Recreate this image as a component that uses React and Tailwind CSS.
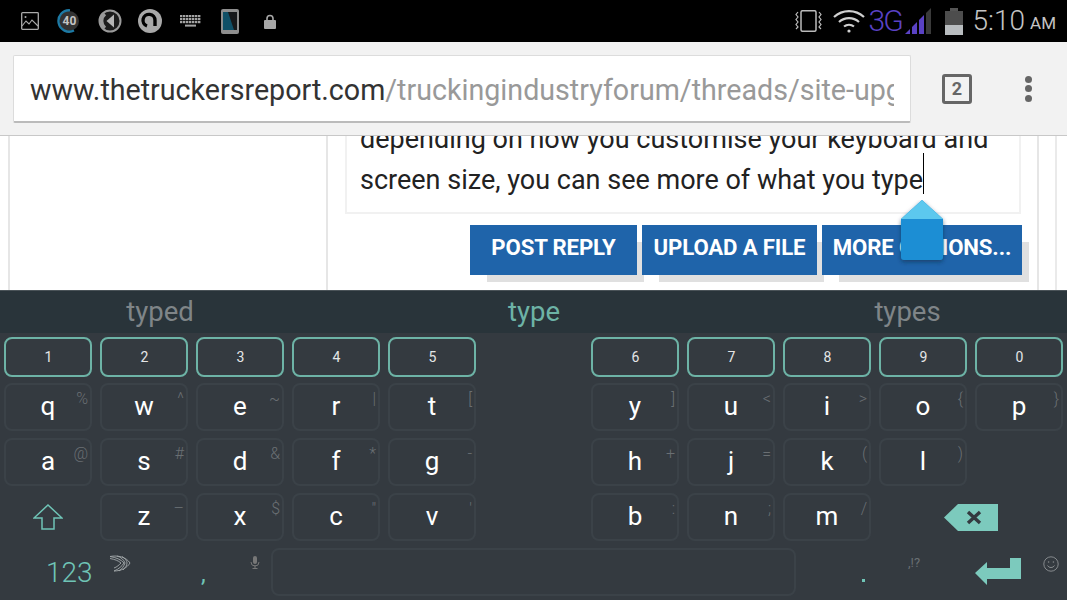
const rows = {
  q: [["q","%"],["w","^"],["e","~"],["r","|"],["t","["]],
  qr: [["y","]"],["u","<"],["i",">"],["o","{"],["p","}"]],
  a: [["a","@"],["s","#"],["d","&"],["f","*"],["g","-"]],
  ar: [["h","+"],["j","="],["k","("],["l",")"]],
  z: [["z","–"],["x","$"],["c","\""],["v","'"]],
  zr: [["b",":"],["n",";"],["m","/"]],
};

function NumKey({ n }) {
  return (
    <div className="w-[88px] h-10 rounded-lg border-2 border-[#6db3a6] flex items-center justify-center text-[14px] text-[#e4e6e7] pl-px">
      {n}
    </div>
  );
}

function Key({ k, h }) {
  return (
    <div className="relative w-[88px] h-12 rounded-lg border-2 border-[#3b4248] flex items-center justify-center text-[26px] leading-none text-white pb-[2px]">
      {k}
      <span className="absolute top-[4px] right-[2px] text-[16px] leading-[20px] text-[#6a6f73] font-light">{h}</span>
    </div>
  );
}

function Group({ children }) {
  return <div className="flex gap-2">{children}</div>;
}

function Row({ children }) {
  return <div className="flex justify-between h-12">{children}</div>;
}

function Gallery() {
  return (
    <svg width="18" height="18" viewBox="0 0 18 18" fill="none" stroke="#aaa" strokeWidth="1.3">
      <rect x="0.7" y="0.7" width="16.6" height="16.6" rx="0.8" />
      <path d="M1 14l4-5 3 3 3-4 6 6" strokeWidth="1.1" />
      <circle cx="4.5" cy="5" r="1" fill="#aaa" stroke="none" />
    </svg>
  );
}

function Ring40() {
  return (
    <svg width="24" height="24" viewBox="0 0 24 24">
      <circle cx="12" cy="12" r="10" fill="#333333" />
      <path d="M13 1.3A10.7 10.7 0 1 0 17 21.5" fill="none" stroke="#1d7aa5" strokeWidth="2.3" />
      <text x="12.5" y="16.3" textAnchor="middle" fontSize="12" fontWeight="700" fill="#c4c4c4" fontFamily="Roboto">40</text>
    </svg>
  );
}

function Volume() {
  return (
    <svg width="24" height="24" viewBox="0 0 24 24">
      <circle cx="12" cy="12" r="10.5" fill="#1c1c1c" stroke="#9a9a9a" strokeWidth="2" />
      <path d="M7 5a9 9 0 0 0 0 14" fill="none" stroke="#9a9a9a" strokeWidth="3.4" />
      <path d="M8.5 12L16 5.5v13z" fill="#b5b5b5" />
    </svg>
  );
}

function CircleA() {
  return (
    <svg width="24" height="24" viewBox="0 0 24 24">
      <circle cx="12" cy="12" r="12" fill="#a8a8a8" />
      <path d="M9 17a6 6 0 1 1 8-5.5V17" fill="none" stroke="#000" strokeWidth="3.4" />
    </svg>
  );
}

function Keyboard() {
  return (
    <svg width="21" height="12" viewBox="0 0 21 12">
      {[0, 1, 2].map((r) =>
        [0, 1, 2, 3, 4, 5, 6].map((c) => (
          <rect key={`${r}-${c}`} x={c * 3} y={r * 3} width="2.4" height="2.2" fill="#a4a4a4" />
        ))
      )}
      <rect x="5" y="9.6" width="11" height="2" fill="#a4a4a4" />
    </svg>
  );
}

function Tablet() {
  return (
    <svg width="18" height="25" viewBox="0 0 18 25">
      <rect width="18" height="25" rx="2" fill="#8e8e8e" />
      <rect x="2" y="3" width="14" height="18" fill="#16181a" />
      <path d="M2 3h5l6 18H2z" fill="#0f4f66" />
    </svg>
  );
}

function Lock() {
  return (
    <svg width="12" height="15" viewBox="0 0 12 15">
      <path d="M3 7V4.5a3 3 0 0 1 6 0V7" fill="none" stroke="#a8a8a8" strokeWidth="1.6" />
      <rect y="6" width="12" height="9" rx="1" fill="#a8a8a8" />
    </svg>
  );
}

function Vibrate() {
  return (
    <svg width="27" height="22" viewBox="0 0 27 22" fill="none" stroke="#bbb" strokeWidth="1.2">
      <rect x="6" y="0.7" width="15" height="20.6" rx="1.5" strokeWidth="1.5" />
      <path d="M3 2L1 4.5 3 7 1 9.5 3 12 1 14.5 3 17 1 19" />
      <path d="M24 2l2 2.5L24 7l2 2.5L24 12l2 2.5L24 17l2 2" />
    </svg>
  );
}

function Wifi() {
  return (
    <svg width="32" height="24" viewBox="0 0 32 24" fill="none" stroke="#d0d0d0" strokeWidth="2.2">
      <path d="M1 8a22 22 0 0 1 30 0" />
      <path d="M6 13a15 15 0 0 1 20 0" />
      <path d="M11 17.5a8 8 0 0 1 10 0" />
      <circle cx="16" cy="22" r="1.6" fill="#d0d0d0" stroke="none" />
    </svg>
  );
}

function Signal() {
  return (
    <svg width="27" height="27" viewBox="0 0 27 27">
      <path d="M0 26l5-5v5z" fill="#5a42c4" />
      <path d="M7 26v-7l5-5v12z" fill="#5a42c4" />
      <path d="M14 26V12l5-5v19z" fill="#5a42c4" />
      <path d="M21 26V5l5-5v26z" fill="#3a3a3a" />
    </svg>
  );
}

function Battery() {
  return (
    <svg width="18" height="27" viewBox="0 0 18 27">
      <rect x="5" y="0" width="8" height="3" fill="#555" />
      <rect x="0" y="3" width="18" height="14" fill="#4d4d4d" />
      <rect x="0" y="17" width="18" height="10" fill="#b8bcbf" />
    </svg>
  );
}

function Shift() {
  return (
    <svg width="30" height="26" viewBox="0 0 30 26" fill="none" stroke="#6fc4b6" strokeWidth="1.5">
      <path d="M15 1L29 14H21V25H9V14H1z" />
    </svg>
  );
}

function Backspace() {
  return (
    <svg width="54" height="27" viewBox="0 0 54 27">
      <path d="M0 13.5L14 0h40v27H14z" fill="#7ccabd" />
      <path d="M24 8l12 11M36 8L24 19" stroke="#343a40" strokeWidth="3.4" fill="none" />
    </svg>
  );
}

function Enter() {
  return (
    <svg width="46" height="27" viewBox="0 0 46 27">
      <path d="M0 15L12 4v6h23V0h11v21H12v6z" fill="#7ccabd" />
    </svg>
  );
}

function Swift() {
  return (
    <svg width="22" height="17" viewBox="0 0 22 17" fill="none" stroke="#a4a9ac" strokeWidth="0.9">
      <path d="M1 1.5C9 0 17 2 21 8c-3 5-9 8-16 8" />
      <path d="M1 1.5c6 1 11 3 14 6.5-2 3-5 6-10 8" />
      <path d="M1 3.5c5 1 8 2 11 4.5-2 2-4 4-7 5" />
      <path d="M8 1c4 1 7 4 8 7-1 3-3 6-6 8M13 1.5c3 2 5 4 5 6.5s-2 5-4 7" />
    </svg>
  );
}

function Mic() {
  return (
    <svg width="10" height="13" viewBox="0 0 10 13" fill="#777">
      <rect x="3" y="0" width="4" height="8" rx="2" />
      <path d="M1 6a4 4 0 0 0 8 0" fill="none" stroke="#777" />
      <rect x="4.5" y="9" width="1" height="3" />
      <rect x="2.5" y="12" width="5" height="1" />
    </svg>
  );
}

function Smile() {
  return (
    <svg width="16" height="16" viewBox="0 0 16 16" fill="none" stroke="#85898c" strokeWidth="1">
      <circle cx="8" cy="8" r="7.2" />
      <path d="M4.5 9.5a4 4 0 0 0 7 0" />
      <circle cx="5.6" cy="6" r="0.8" fill="#85898c" stroke="none" />
      <circle cx="10.4" cy="6" r="0.8" fill="#85898c" stroke="none" />
    </svg>
  );
}

function Handle() {
  return (
    <svg width="52" height="70" viewBox="0 0 52 70" className="absolute left-[896px] top-[64px]">
      <defs>
        <filter id="s" x="-30%" y="-30%" width="160%" height="160%">
          <feDropShadow dx="0" dy="2" stdDeviation="2" floodColor="#0b2b4a" floodOpacity="0.6" />
        </filter>
      </defs>
      <path d="M26 0L47 19V57a3 3 0 0 1-3 3H8a3 3 0 0 1-3-3V19z" fill="#1c8ed4" filter="url(#s)" />
      <path d="M26 0L47 19H5z" fill="#5cc8ee" />
    </svg>
  );
}

function SiteButton({ w, children }) {
  return (
    <div className={`${w} h-[50px] bg-[#1f64aa] text-white font-bold text-[22.2px] tracking-[-0.15px] flex items-center justify-center whitespace-nowrap pb-[4px] shadow-[12px_12px_0_-5px_#e0e0e0]`}>
      {children}
    </div>
  );
}

export default function App() {
  return (
    <div className="w-[1067px] h-[600px] flex flex-col overflow-hidden bg-white font-['Roboto',sans-serif]">
      {/* status bar */}
      <div className="h-[42px] bg-black flex items-center justify-between shrink-0">
        <div className="flex items-center">
          <div className="ml-[21px]"><Gallery /></div>
          <div className="ml-[18px]"><Ring40 /></div>
          <div className="ml-[17px]"><Volume /></div>
          <div className="ml-[16px]"><CircleA /></div>
          <div className="ml-[18px]"><Keyboard /></div>
          <div className="ml-[20px]"><Tablet /></div>
          <div className="ml-[25px]"><Lock /></div>
        </div>
        <div className="flex items-center">
          <Vibrate />
          <div className="ml-[11px]"><Wifi /></div>
          <div className="ml-[4px] text-[#5a42c4] text-[30px] font-light leading-none w-[36px] tracking-[-2px]">3G</div>
          <div><Signal /></div>
          <div className="ml-[13px]"><Battery /></div>
          <div className="ml-[10px] text-[#c4c4c4] text-[28px] font-light leading-none">5:10</div>
          <div className="ml-[5px] mr-[11px] mt-[4px] text-[#c4c4c4] text-[17px] leading-none">AM</div>
        </div>
      </div>

      {/* browser toolbar */}
      <div className="h-[94px] shrink-0 bg-[#f2f2f2] border-b border-[#c8c8c8] flex items-center pl-[13px]">
        <div className="w-[898px] h-[68px] bg-white border border-[#dcdcdc] border-b-[#bbbbbb] border-b-2 rounded-[2px] pl-[16px] pr-[16px] flex items-center">
          <div className="overflow-hidden whitespace-nowrap text-[28.65px] leading-[36px] pt-[3px] w-full">
            <span className="text-[#333333]">www.thetruckersreport.com</span>
            <span className="text-[#999999]">/truckingindustryforum/threads/site-upgrade</span>
          </div>
        </div>
        <div className="ml-[31px] w-[30px] h-[30px] border-[3px] border-[#666666] rounded-[3px] flex items-center justify-center text-[18px] font-bold text-[#666666]">
          2
        </div>
        <div className="ml-[53px] flex flex-col gap-[2.5px]">
          <div className="w-[7px] h-[7px] rounded-full bg-[#666666]" />
          <div className="w-[7px] h-[7px] rounded-full bg-[#666666]" />
          <div className="w-[7px] h-[7px] rounded-full bg-[#666666]" />
        </div>
      </div>

      {/* web content */}
      <div className="relative h-[154px] shrink-0 overflow-hidden flex bg-white">
        <div className="w-[8px] shrink-0" />
        <div className="w-[318px] shrink-0 border-l-2 border-[#e6e6e6]" />
        <div className="w-[713px] shrink-0 border-l-2 border-r-2 border-[#e6e6e6] pl-[17px] flex flex-col justify-end pb-[15px]">
          <div className="w-[676px] border-2 border-[#f1f1f1] pl-[13px] pb-[11px] text-[27px] leading-[41px] text-[#222222] whitespace-nowrap">
            <div>depending on how you customise your keyboard and</div>
            <div className="flex items-start">
              screen size, you can see more of what you type
              <span className="w-[1px] h-[41px] -mt-[7px] bg-black" />
            </div>
          </div>
          <div className="mt-[11px] flex gap-[5px] ml-[125px]">
            <SiteButton w="w-[167px]">POST REPLY</SiteButton>
            <SiteButton w="w-[175px]">UPLOAD A FILE</SiteButton>
            <SiteButton w="w-[200px]">MORE OPTIONS...</SiteButton>
          </div>
        </div>
        <div className="w-[18px] shrink-0 border-r-2 border-[#eaeaea]" />
        <Handle />
      </div>

      {/* keyboard */}
      <div className="flex-1 bg-[#343a40] flex flex-col">
        <div className="h-[43px] shrink-0 bg-[#29343a] border-t border-[#4a5358] flex items-center text-center text-[27.5px] leading-none">
          <div className="w-[320px] text-[#7f8588]">typed</div>
          <div className="w-[428px] text-[#6db3a6]">type</div>
          <div className="w-[319px] text-[#7f8588]">types</div>
        </div>
        <div className="px-1 pt-1 flex flex-col gap-[7px]">
          <div className="flex justify-between -mb-px">
            <Group>{[1, 2, 3, 4, 5].map((n) => <NumKey key={n} n={n} />)}</Group>
            <Group>{[6, 7, 8, 9, 0].map((n) => <NumKey key={n} n={n} />)}</Group>
          </div>
          <Row>
            <Group>{rows.q.map(([k, h]) => <Key key={k} k={k} h={h} />)}</Group>
            <Group>{rows.qr.map(([k, h]) => <Key key={k} k={k} h={h} />)}</Group>
          </Row>
          <Row>
            <Group>{rows.a.map(([k, h]) => <Key key={k} k={k} h={h} />)}</Group>
            <div className="flex gap-2 w-[472px]">{rows.ar.map(([k, h]) => <Key key={k} k={k} h={h} />)}</div>
          </Row>
          <Row>
            <Group>
              <div className="w-[88px] flex items-center justify-center"><Shift /></div>
              {rows.z.map(([k, h]) => <Key key={k} k={k} h={h} />)}
            </Group>
            <Group>
              {rows.zr.map(([k, h]) => <Key key={k} k={k} h={h} />)}
              <div className="w-[184px] flex items-center justify-center"><Backspace /></div>
            </Group>
          </Row>
          <div className="flex h-12">
            <div className="relative w-[184px] text-[#6fc4b6] text-[28px] leading-none font-light pl-[42px] pt-[11px]">
              123
              <span className="absolute left-[105px] top-[7px]"><Swift /></span>
            </div>
            <div className="relative w-[83px] text-[#6fc4b6] text-[24px] leading-none pl-[13px] pt-[14px]">
              ,
              <span className="absolute left-[62px] top-[8px]"><Mic /></span>
            </div>
            <div className="w-[525px] h-12 rounded-lg border-2 border-[#3b4248]" />
            <div className="relative flex-1">
              <span className="absolute left-[66px] top-[31px] w-[3px] h-[3px] bg-[#6fc4b6]" />
              <span className="absolute left-[112px] top-[8px] text-[13px] leading-none text-[#6a6f73]">,!?</span>
              <span className="absolute left-[179px] top-[10px]"><Enter /></span>
              <span className="absolute left-[247px] top-[8px]"><Smile /></span>
            </div>
          </div>
        </div>
      </div>
    </div>
  );
}
